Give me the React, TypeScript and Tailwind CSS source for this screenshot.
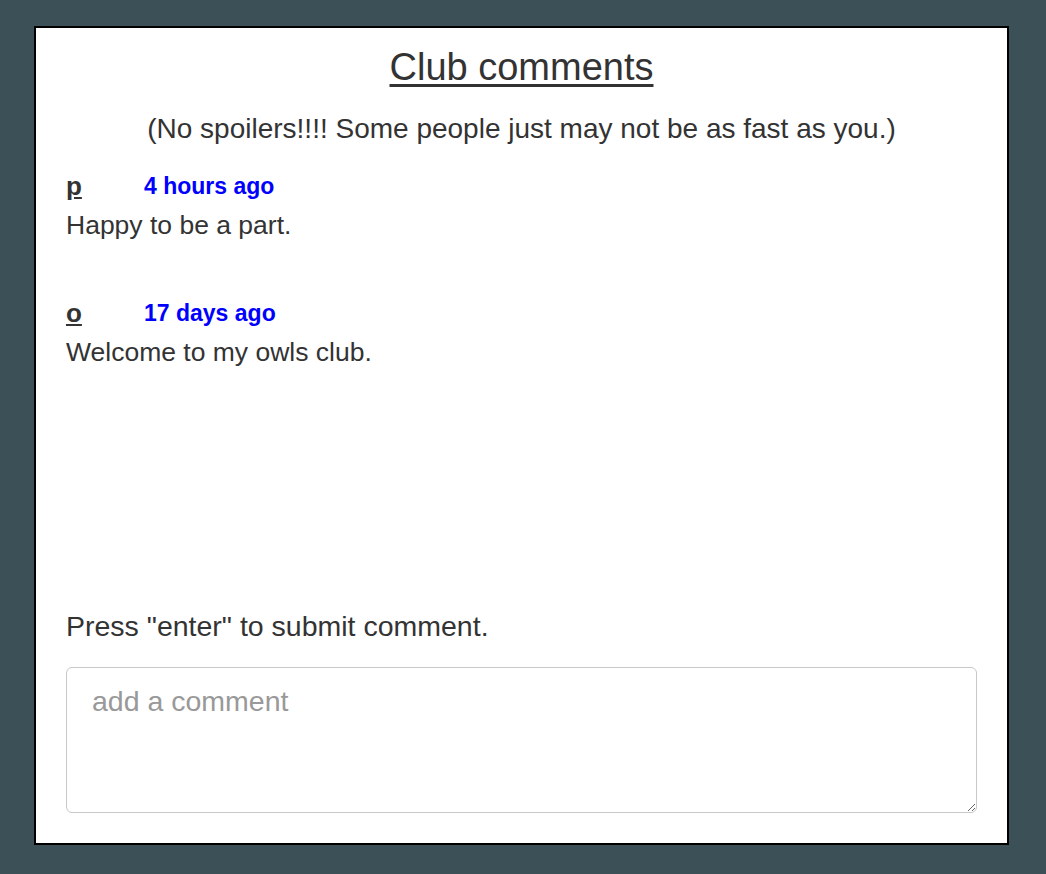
const comments = [
  { user: 'p', when: '4 hours ago', text: 'Happy to be a part.' },
  { user: 'o', when: '17 days ago', text: 'Welcome to my owls club.' },
]

const Comment = ({ user, when, text }: { user: string; when: string; text: string }) => (
  <div className="mb-[49px]">
    <div className="flex items-center h-[39px]">
      <span className="w-[78px] text-[26px] font-bold underline">{user}</span>
      <span className="text-[23px] font-bold text-[#0000ff]">{when}</span>
    </div>
    <p className="text-[26.5px] leading-[39px]">{text}</p>
  </div>
)

export default function App() {
  return (
    <div
      className="min-h-screen bg-[#3c5157] pt-[26px] pl-[34px] text-[#333]"
      style={{ fontFamily: '"Liberation Sans", Arial, sans-serif' }}
    >
      <div className="w-[975px] h-[819px] border-2 border-black bg-white flex flex-col px-[30px] pb-[30px]">
        <h1 className="mt-[19px] text-[38px] leading-[40px] text-center underline underline-offset-[4px]">
          Club comments
        </h1>
        <p className="mt-[22px] text-[28px] leading-[39px] text-center">
          (No spoilers!!!! Some people just may not be as fast as you.)
        </p>

        <div className="mt-[19px]">
          {comments.map((c) => (
            <Comment key={c.user} {...c} />
          ))}
        </div>

        <div className="mt-auto">
          <p className="text-[28.5px] leading-[39px]">Press "enter" to submit comment.</p>
          <textarea
            placeholder="add a comment"
            className="mt-[21px] block w-full h-[146px] border-[1.5px] border-[#c8c8c8] rounded-md px-[25px] py-[16px] text-[28.5px] leading-[34px] placeholder:text-[#999] outline-none"
          />
        </div>
      </div>
    </div>
  )
}
